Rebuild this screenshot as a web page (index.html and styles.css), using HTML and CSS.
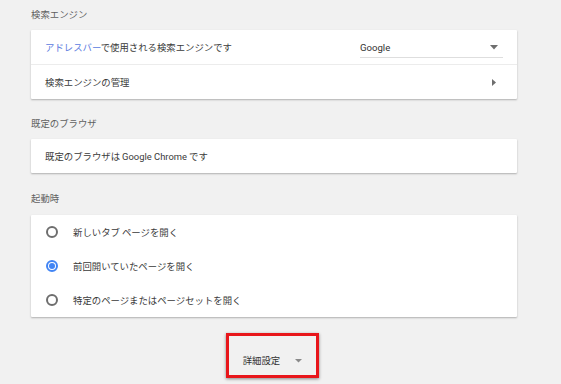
FILE: index.html
```html
<!DOCTYPE html>
<html lang="ja">
<head>
<meta charset="utf-8">
<link rel="stylesheet" href="styles.css">
</head>
<body>
<main class="page">
  <section class="section">
    <h2 class="title">検索エンジン</h2>
    <div class="card">
      <div class="row">
        <span class="label"><span class="link">アドレスバー</span>で使用される検索エンジンです</span>
        <div class="select">
          <span>Google</span>
          <svg class="caret" width="8" height="5" viewBox="0 0 8 5"><path d="M0 0h8L4 4.5z" fill="#6e6e6e"/></svg>
        </div>
      </div>
      <div class="row divided">
        <span class="label">検索エンジンの管理</span>
        <svg class="chev" width="4" height="7" viewBox="0 0 4 7"><path d="M0 0l4 3.5L0 7z" fill="#6e6e6e"/></svg>
      </div>
    </div>
  </section>
  <section class="section">
    <h2 class="title">既定のブラウザ</h2>
    <div class="card">
      <div class="row">
        <span class="label">既定のブラウザは <span class="latin">Google Chrome</span> です</span>
      </div>
    </div>
  </section>
  <section class="section startup">
    <h2 class="title">起動時</h2>
    <div class="card">
      <div class="row radio-row">
        <span class="radio"></span>
        <span class="label">新しいタブ ページを開く</span>
      </div>
      <div class="row radio-row">
        <span class="radio checked"></span>
        <span class="label">前回開いていたページを開く</span>
      </div>
      <div class="row radio-row">
        <span class="radio"></span>
        <span class="label">特定のページまたはページセットを開く</span>
      </div>
    </div>
  </section>
  <div class="advanced-wrap">
    <div class="advanced">
      <span class="label">詳細設定</span>
      <svg width="7" height="4" viewBox="0 0 7 4"><path d="M0 0h7L3.5 3.5z" fill="#8a8a8a"/></svg>
    </div>
  </div>
</main>
</body>
</html>
```
FILE: styles.css
```css
* { box-sizing: border-box; }
html, body {
  margin: 0;
  background: #f1f1f1;
}
body {
  font-family: "Noto Sans CJK JP", "Noto Sans", sans-serif;
  font-size: 9.4px;
  color: #3a3a3a;
  width: 561px;
  height: 384px;
  overflow: hidden;
}
.page {
  padding-left: 31px;
  width: 517px;
}
.section + .section { margin-top: 10px; }
.section.startup { margin-top: 11px; }
.title {
  margin: 0;
  padding: 7px 0 9px;
  font-size: 9.4px;
  line-height: 14px;
  font-weight: normal;
  color: #5f5f5f;
}
.startup .title { padding-bottom: 10px; }
.card {
  background: #fff;
  box-shadow: 0 1px 2px rgba(0,0,0,0.28);
  border-radius: 1px;
}
.row {
  height: 34px;
  display: flex;
  align-items: center;
  padding: 0 20px 0 14px;
}
.row.divided {
  border-top: 1px solid #ececec;
  height: 35px;
}
.label {
  line-height: 14px;
  white-space: nowrap;
}
.link { color: #5a7be0; }
.latin { font-family: Roboto, "Noto Sans CJK JP", sans-serif; }
.select {
  margin-left: auto;
  width: 143px;
  height: 20px;
  display: flex;
  align-items: center;
  justify-content: space-between;
  border-bottom: 1px solid #dedede;
  padding: 0 5px 0 0;
  font-family: Roboto, sans-serif;
  font-size: 9.6px;
  color: #333;
  position: relative;
  top: 1px;
  margin-right: -6px;
}
.chev { margin-left: auto; margin-right: 1px; }
.radio-row { padding-left: 15px; }
.radio {
  width: 12px;
  height: 12px;
  border: 2px solid #6e6e6e;
  border-radius: 50%;
  margin-right: 15px;
  flex: none;
  display: flex;
  align-items: center;
  justify-content: center;
}
.radio.checked { border-color: #4285f4; }
.radio.checked::after {
  content: "";
  width: 6px;
  height: 6px;
  border-radius: 50%;
  background: #4285f4;
}
.advanced-wrap {
  display: flex;
  justify-content: center;
  padding-top: 16px;
  padding-right: 3px;
}
.advanced {
  width: 93px;
  height: 45px;
  border: 3px solid #e8161b;
  box-shadow: 0 1px 3px rgba(0,0,0,0.45);
  display: flex;
  align-items: flex-end;
  justify-content: center;
  gap: 15px;
  padding-bottom: 8px;
  padding-right: 0;
  color: #333;
}
.advanced svg { margin-bottom: 4px; }
```
